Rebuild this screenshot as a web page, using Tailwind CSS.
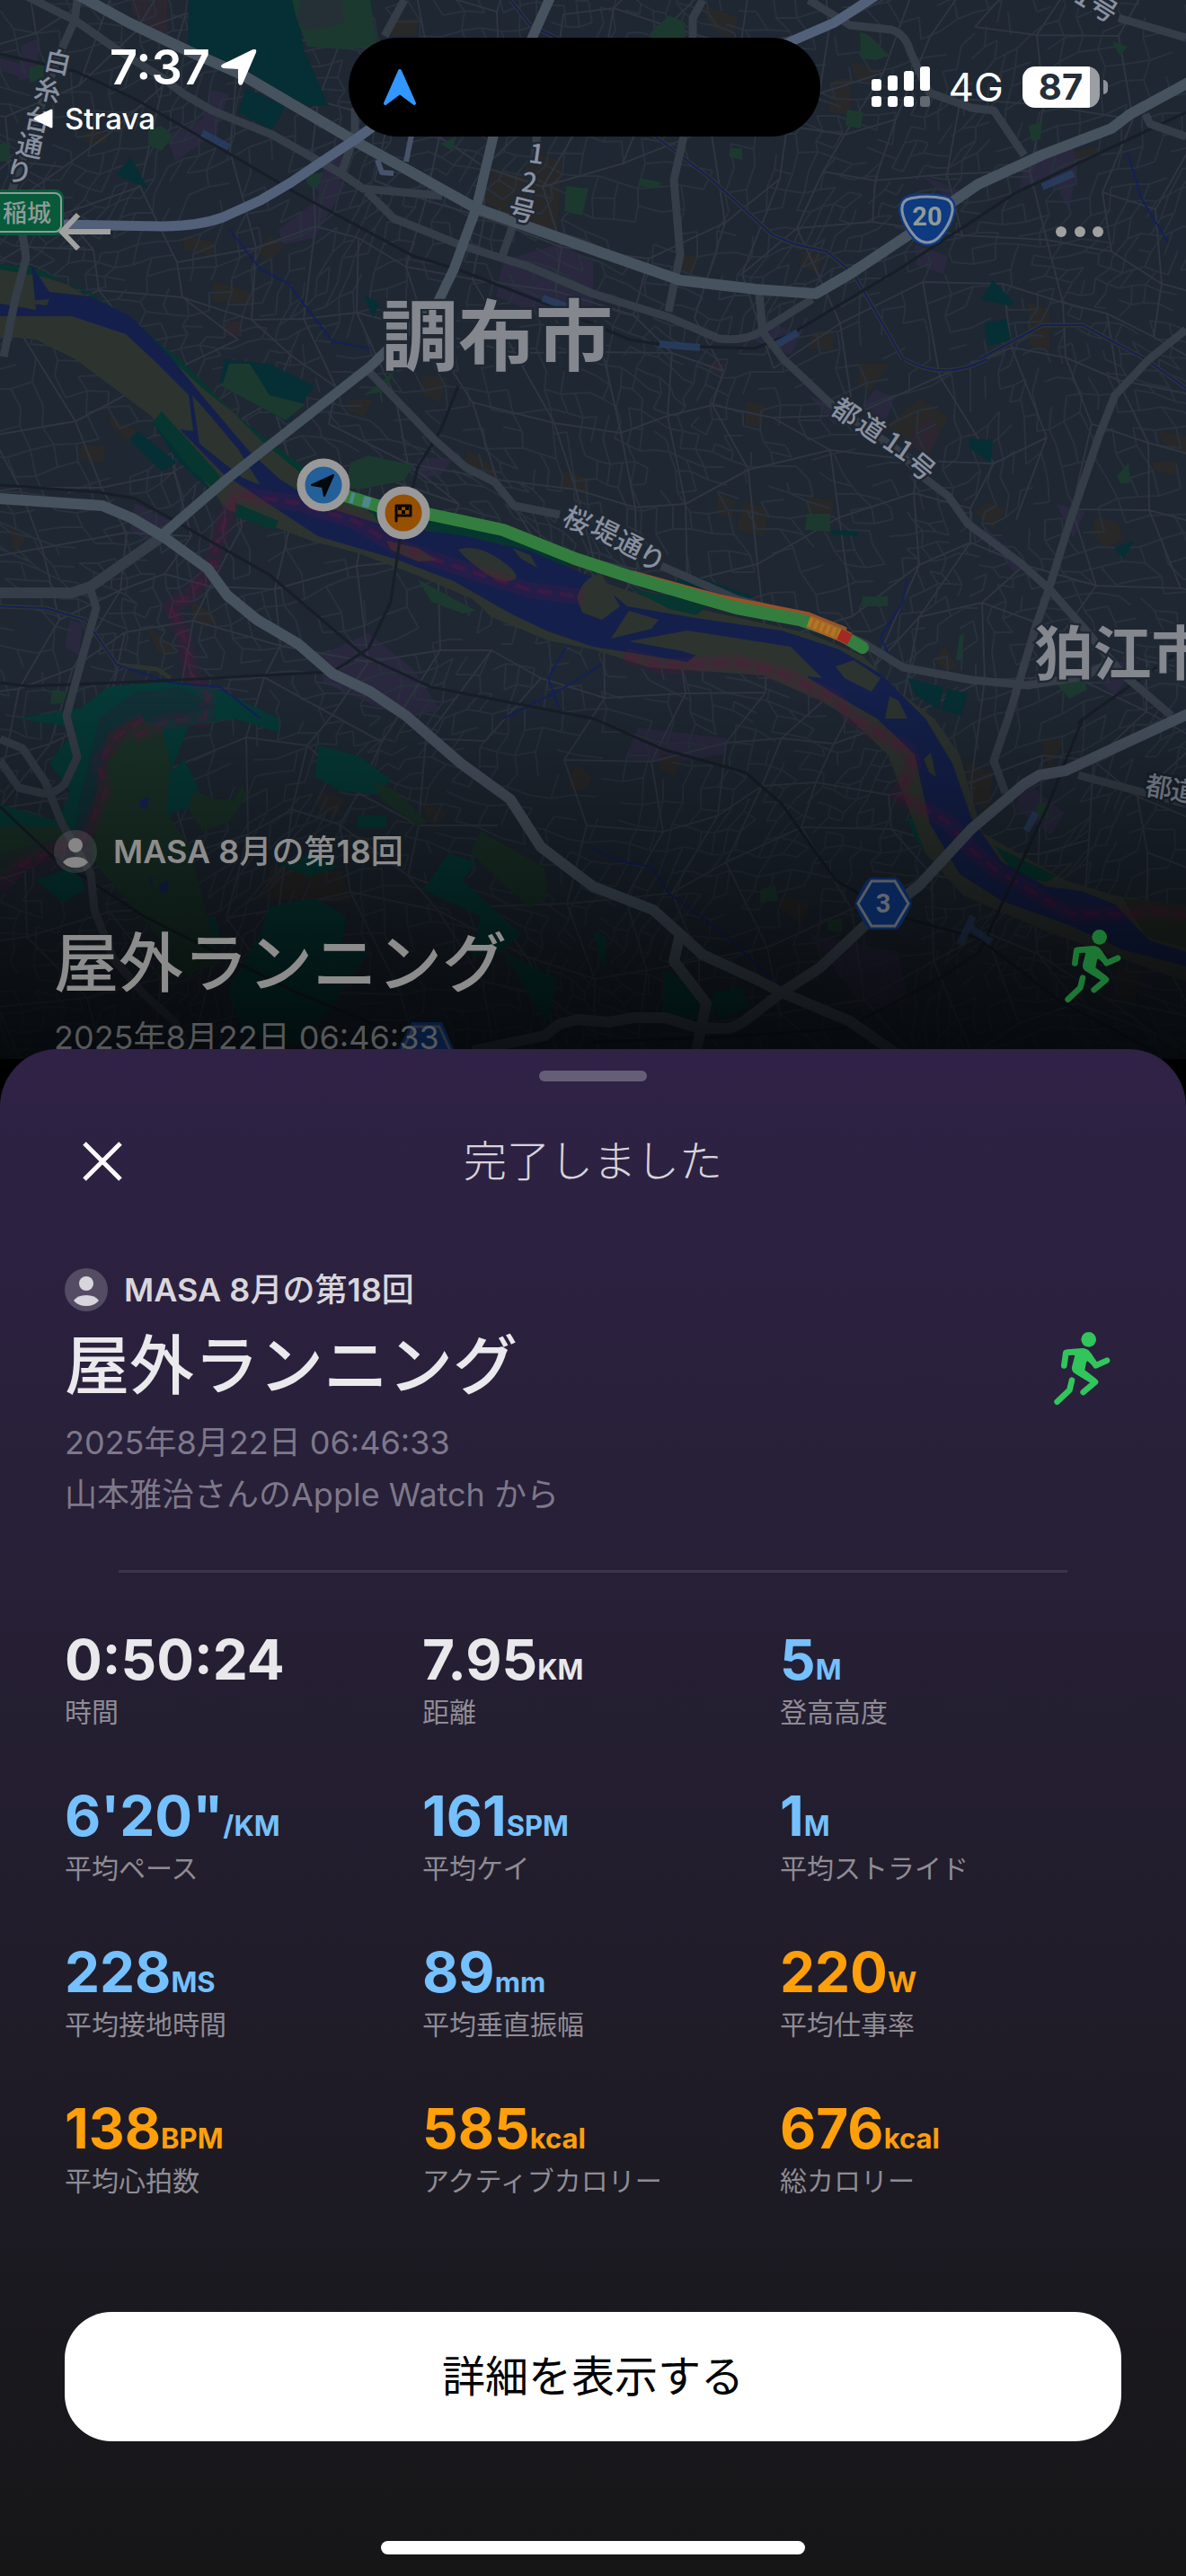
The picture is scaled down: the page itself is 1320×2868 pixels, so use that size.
<!DOCTYPE html>
<html lang="ja">
<head>
<meta charset="utf-8">
<meta name="viewport" content="width=device-width, initial-scale=1">
<title>屋外ランニング</title>
<script src="https://cdn.jsdelivr.net/npm/@tailwindcss/browser@4"></script>
</head>
<body class="bg-black font-['Inter','Noto_Sans_CJK_JP',sans-serif] text-white">
<svg class="hidden" aria-hidden="true">
  <symbol id="runner" viewBox="95 93 192 250">
    <g fill="none" stroke="currentColor" stroke-linecap="round" stroke-linejoin="round">
      <path stroke-width="20" d="M132 207L138 164L196 160M214 172L238 207L275 190M180 228L236 262L196 296"/>
      <path stroke-width="20" d="M109 328L150 289L158 256"/>
    </g>
    <path fill="currentColor" d="M134 155Q160 150 196 150Q212 151 220 164L236 192L226 206L210 192L206 196L201 222L240 252L228 270L172 236Q156 228 158 212L168 174Z"/>
    <circle fill="currentColor" cx="214" cy="120" r="25"/>
  </symbol>
  <symbol id="avatar" viewBox="0 0 48 48">
    <circle cx="24" cy="24" r="24" fill="currentColor" opacity=".24"/>
    <circle cx="24" cy="17" r="8" fill="currentColor"/>
    <path d="M10 36Q14 30 24 30T38 36Q33 42 24 42T10 36Z" fill="currentColor"/>
  </symbol>
</svg>

<main class="flex min-h-screen flex-col">
  <section class="relative overflow-hidden">
    <svg class="absolute inset-0 h-full w-full" viewBox="0 0 1320 1179" preserveAspectRatio="xMidYMin slice" aria-label="地図" role="img">
      <defs>
        <linearGradient id="fade" x1="0" y1="0" x2="0" y2="1">
          <stop offset="0" stop-color="#000" stop-opacity="0"/>
          <stop offset=".5" stop-color="#000" stop-opacity=".38"/>
          <stop offset="1" stop-color="#020406" stop-opacity=".85"/>
        </linearGradient>
      </defs>
      <rect width="1320" height="1179" fill="#1e2732"/>
      <!-- blocks of land use -->
      <g fill="#29283f">
        <path d="M24 50L45 42L40 85L20 90ZM235 100L255 105L240 145L225 130ZM185 150L230 130L245 145L195 180ZM0 65L30 72L20 85L0 78ZM365 195L385 205L350 265L315 272L310 255L350 225ZM350 210L375 160L388 172L370 225ZM560 290L620 272L660 290V345L600 350L552 330ZM1140 180L1190 155L1200 180L1190 235L1170 195L1135 210ZM1025 195L1068 212L1060 225ZM1018 272L1055 285L1050 305L1020 295ZM150 560L190 580L175 610L145 590ZM465 510L505 510L490 530L465 532ZM355 730L410 705L460 745L490 790L450 800L360 760ZM78 690L92 695L88 730L72 720ZM960 450L975 433L996 443L985 470L965 470ZM900 440L935 455L930 475ZM1175 560L1207 570L1195 600ZM1090 580L1140 630L1130 640ZM710 810L810 822L805 840L745 850L695 845ZM1140 870L1185 905L1170 930L1130 900ZM900 1040L1000 1060L1010 1115L960 1120ZM845 350L890 375L880 395L840 380ZM1207 740L1270 735L1240 775Z"/>
      </g>
      <g fill="#292829">
        <path d="M100 140L120 150L118 160L92 158ZM205 262L240 270L235 285L205 278ZM300 262L316 275L298 293L286 278ZM238 313L278 325L282 338L237 335ZM548 187L580 195L595 170L625 180L620 255L600 260L540 225ZM440 22L466 20L463 40L430 40ZM780 5L822 20L815 42L800 38L790 28ZM948 68L982 80L965 92L950 85ZM924 90L947 86L946 128L922 125ZM757 284L776 285L772 306L754 303ZM893 280L916 285L910 303L890 297ZM1195 168L1225 164L1215 178L1200 180ZM1145 336L1168 345L1168 390L1145 385ZM905 368L928 368L926 390L900 388ZM120 462L155 480L140 490L125 475ZM90 495L118 497L115 515L90 512ZM390 445L415 445L405 465L385 455ZM470 417L497 420L490 448L470 440ZM520 500L553 522L550 535L517 515ZM628 525L655 532L655 552L622 540ZM10 585L30 600L16 615ZM215 670L243 687L228 700L212 685ZM163 697L195 720L190 730L175 725ZM957 405L990 405L968 436L955 428ZM1025 443L1055 465L1035 505L985 475ZM830 447L852 450L848 477L830 472ZM800 547L818 560L815 577L797 573ZM828 558L855 567L850 598L820 590ZM898 553L928 558L926 572L898 570ZM1085 570L1100 560L1120 568L1105 590ZM1220 575L1245 582L1250 600L1230 610L1215 595ZM1040 735L1052 718L1065 745L1050 745ZM1290 480L1320 485V505L1293 492ZM1285 515L1310 513V530L1283 524ZM355 880L385 890L372 912L350 895ZM468 893L498 905L482 922ZM302 965L380 970L390 1005L290 1000ZM735 838L760 845L750 865L733 855ZM1075 850L1105 860L1100 905L1080 890ZM1158 823L1183 825L1168 858ZM870 998L902 1005L890 1028L868 1010ZM640 850L660 865L650 880L632 878ZM1243 1075L1270 1080L1262 1115L1240 1110Z"/>
      </g>
      <path fill="#2c2630" d="M147 0H186V43L165 32L147 15ZM248 358L268 357L270 375L250 374ZM1020 478L1035 465L1046 483L1032 510L1010 492ZM788 405H808L802 416L790 414Z"/>
      <g id="streets" fill="none" stroke="#28313c" stroke-width="2"></g>
      <g id="lanes" fill="none" stroke="#2f3541" stroke-width="2"></g>
      <!-- parks and woods -->
      <path fill="#052f34" d="M210 0H330L338 55L366 118H345L250 82L209 63ZM274 98L317 118L303 145L265 125ZM130 195L145 175L165 210L130 195ZM1092 333L1105 312L1130 338L1122 340ZM1095 360L1120 355L1125 378L1100 385ZM405 328L422 338L415 354ZM174 458L245 530L232 545L195 510L170 470ZM153 480L197 515L180 525L145 490ZM260 560L305 575L300 587L262 572ZM250 400L300 405L350 430L320 470L285 450L245 425ZM1078 488L1105 490L1103 515L1080 500ZM745 650L770 640L840 665L800 677ZM927 590L955 592V597L925 595ZM1240 610L1262 602L1250 622ZM1010 755L1050 765L1045 790L1020 775ZM1055 767L1077 772L1070 797L1048 790Z"/>
      <path fill="#1c392f" d="M325 0H412L420 52L385 55L342 52L330 20ZM405 440L440 412L428 436ZM390 515L410 507L460 518L450 535L400 545L385 540ZM247 430L255 405L278 405L300 440L340 450L318 468ZM165 145L180 140L192 152L180 168L165 162ZM340 195L360 192L352 210L342 205ZM490 160L508 152L503 168ZM630 207L655 210L648 240L628 235ZM33 75L50 70L48 90L33 92ZM0 160L11 158V178L0 180ZM725 35L745 17L762 25L763 42L722 42ZM957 35L968 40L990 62L975 67L958 65ZM943 122L961 125L958 143L941 140ZM1145 140L1160 135L1158 155L1148 158ZM812 165H826V178L812 175ZM712 198L736 203L733 209L710 207ZM1238 46L1255 52L1246 62ZM1243 530L1256 515L1258 538L1247 538ZM898 572H924V592L896 590ZM465 645L530 680L515 683L480 670ZM1175 760L1205 753L1210 768L1190 778ZM58 768L75 770L70 783L56 784ZM1155 895L1167 893V912L1153 908ZM847 990L863 985L866 1003L845 1005ZM922 1025L937 1022L937 1038L921 1036ZM960 664H988V675H958ZM1068 708L1073 705L1070 735L1064 735Z"/>
      <path fill="#2c2c3c" d="M330 22L335 0H380L384 25L340 35Z" opacity=".6"/>
      <path fill="#053a37" d="M20 800L90 788L120 765L190 758L245 768L290 790L310 800V815L260 800L210 808L190 860L190 910L60 945L0 960V895L65 915L78 880L55 850L85 810ZM355 830L400 842L435 868L420 885L380 880L350 865ZM475 985L500 950L530 960L515 980L580 1040L560 1060L620 1090L610 1140L560 1060L525 1065L535 1020L470 990ZM300 1010L350 1000L385 1020L380 1050L410 1060L370 1120L330 1165L270 1150L255 1100L290 1040ZM40 980L85 965L95 990L70 1005ZM660 1037L675 1043L672 1080ZM738 1080L780 1100V1135L738 1130ZM795 1105L825 1100L833 1120L805 1135L790 1120ZM1010 912L1032 908L1045 940L1035 957L1020 935ZM310 962L350 950L378 965L345 976ZM398 908H430V921H398ZM200 1030L240 1020L245 1045L215 1060ZM190 860L205 845L222 880L212 900L190 905Z"/>
      <path fill="#1a3329" d="M120 815L150 800L180 810L190 850L185 905L210 940L225 1000L245 1070L210 1085L170 1082L190 1060L105 960L98 920L115 850ZM215 880L240 890L260 890L270 875L275 885L255 915L225 925L210 900ZM415 870L440 880L475 915L465 920L425 890ZM535 925L560 940L605 965L610 1000L590 1010L560 985L525 950ZM0 920L75 920L95 935L0 975Z"/>
      <path fill="#16245a" d="M157 890L166 888L163 900L155 898ZM178 984L188 980L186 994L177 992ZM166 978L170 976L169 988Z"/>
      <path fill="#281f3a" opacity=".35" d="M110 800L150 770L200 765L240 785L200 800L150 805L120 850L100 960L0 970V950L80 930Z"/>
      <!-- river and its banks -->
      <path fill="#2d3430" d="M0 298L33 303L75 317L130 350L198 400L245 445L295 492L337 527L420 575L500 590L560 606L640 637L720 665L840 692L900 705L960 730L1000 770L1040 800L1068 840L1093 927L1186 980L1241 997L1320 1010V1093L1165 1037L1072 997L1030 950L988 840L946 800L913 780L849 752L723 743L660 723L610 713L547 687L526 667L463 640L396 615L349 603L253 567L168 463L84 400L40 378L0 374Z"/>
      <path fill="#06362f" d="M0 294L35 297L100 325L160 370L225 432L300 492L345 525L335 527L290 490L200 400L130 345L70 312L0 300ZM180 458L245 530L240 545L215 525L170 470ZM262 560L310 580L305 590L262 575ZM405 555L500 580L600 600L640 620L630 632L560 606L420 580ZM1107 942L1175 975L1165 982L1130 975ZM700 655L790 672L775 685L745 678Z"/>
      <path fill="#14204b" d="M0 338L40 345L35 295L55 325L100 330L145 352L189 396L227 443L278 503L311 533L358 563L421 583L518 597L589 613L660 643L698 675L774 688L870 702L934 723L980 750L1030 800L1060 850L1081 910L1115 960L1165 987L1203 992L1241 1007L1279 1047L1320 1060V1076L1249 1057L1190 1030L1115 1003L1068 973L1035 917L1018 840L976 800L929 773L900 755L887 727L799 710L765 737L660 720L610 703L568 683L505 647L442 623L354 597L278 547L248 527L200 478L215 480L210 440L170 400L140 372L80 352L0 352Z"/>
      <path fill="#2d3430" d="M32 335L55 333L52 340L35 338ZM214 440L240 470L265 500L290 540L270 532L222 494ZM510 612Q530 605 555 622T573 645Q560 652 540 638T510 612ZM430 602L465 610L487 624L465 625L435 612ZM570 610L590 618L598 632L580 622ZM642 665Q650 640 670 640L690 675L670 690L648 682ZM680 711L700 680L733 690L725 700ZM700 714L765 702L880 720L915 755L880 750L800 738L760 725ZM930 742L950 735L980 755L970 770L940 755ZM990 775L1000 780L1010 800H985ZM1028 845L1036 838L1042 865L1034 860Z"/>
      <path d="M1250 1000L1320 1008V1055L1275 1043Z" fill="#252d27"/>
      <!-- popular-route shading -->
      <g fill="none" stroke="#61163f" stroke-linejoin="round">
        <path stroke-width="18" opacity=".2" d="M232 640L248 585L263 550L330 560L395 580L440 608L520 635L590 657L650 665M210 665L190 675L205 710L212 750L232 775L228 800L185 803L150 820M240 625L210 665M695 730L740 742L820 737L870 750L930 778L950 800L1010 835L1017 850L1000 885L1055 915L1080 945L1110 970L1190 1017L1240 1018L1285 1014L1320 1020M160 800L130 820L110 850L118 880L95 930L20 965L0 990"/>
        <path stroke-width="5" stroke-dasharray="16 9" opacity=".38" d="M232 640L248 585L263 550L330 560L395 580L440 608L520 635L590 657L650 665M210 665L190 675L205 710L212 750L232 775L228 800L185 803L150 820M240 625L210 665M695 730L740 742L820 737L870 750L930 778L950 800L1010 835L1017 850L1000 885L1055 915L1080 945L1110 970L1190 1017L1240 1018L1285 1014L1320 1020M160 800L130 820L110 850L118 880L95 930L20 965"/>
      </g>
      <!-- streams and railways -->
      <path fill="none" stroke="#2d3430" stroke-width="5" d="M568 0L590 28L625 45M727 150L790 198L860 262L885 272L920 280L950 305L985 365L1005 400M1090 400L1160 362L1205 362L1275 400L1320 432M1007 400Q1050 425 1098 400M0 675L50 677L95 690L130 740L175 745L190 755"/>
      <path fill="none" stroke="#14205a" stroke-width="2" d="M568 0L590 28L625 45M727 150L790 198L860 262L885 272L920 280L950 305L985 365L1005 400M1090 400L1160 362L1205 362L1275 400L1320 432M1007 400Q1050 425 1098 400M0 675L50 677L95 690L130 740L190 760L245 765L290 800M255 255L290 300L320 315L370 380L412 388M1010 645L1005 670L980 710L990 730M660 945L695 960L725 965L745 995L800 1035L860 1090M630 720L610 755L625 795M670 740L620 770L560 800M1255 170L1270 220L1300 270"/>
      <path fill="none" stroke="#171e28" stroke-width="3" d="M0 60L85 80L150 110L250 168L330 215L460 285L510 300L600 335L700 378L744 385L840 388L880 372L1000 300L1130 215L1320 125M0 540L110 548L150 555L200 583L300 640L405 730L480 765L660 800L740 835L830 860L870 895L930 980L1000 1020L1090 1045L1180 1115L1280 1168M0 760L30 764L180 758L370 748L410 722L435 670L445 600M510 430L490 480L465 520L455 560M1205 800L1165 900L1090 1060L1045 1090L940 1145L800 1155L660 1160M1320 720L1220 790L1200 805M0 898L60 955L160 1020L330 1105L500 1175"/>
      <path fill="none" stroke="#294065" stroke-width="8" d="M225 148L255 164M734 383L779 387M862 385L888 370M1160 208L1195 193M604 332L632 342M1083 1020L1068 1052M1080 1033L1103 1049M1153 905L1142 925" opacity=".8"/>
      <!-- roads, lesser to greater -->
      <g fill="none" stroke="#353d48" stroke-linejoin="round" stroke-width="9">
        <path d="M30 -4L84 23L130 55L181 87L205 105L236 123L303 150L379 193L404 210L492 218M408 213L438 243L513 273L589 297L660 327L744 353L800 377Q830 380 845 370L904 333M86 0L83 23L63 67L13 213M25 260L29 287L17 333L4 397M404 210L380 193L395 150V120M450 0L428 40M597 150V180M573 245L558 288"/>
        <path d="M782 0L771 20V45M761 152L750 200L757 283L744 347M900 0L946 28L992 33Q1008 38 1013 57L1034 103L1081 120L1106 123L1140 173M1245 20L1320 42M1275 127L1280 138L1320 152M845 327L849 370L872 400L925 450L997 500L1030 533L1056 553L1077 583L1136 627L1169 657L1207 700L1249 750L1304 797M1320 367L1279 400L1241 440L1224 483L1190 583L1167 657L1152 700L1123 797L1106 847L1119 883M736 630L820 667L900 690L963 717L1005 743L1081 757L1144 763L1207 753L1240 735M410 413L484 490L518 520L551 537L572 563L623 573M101 657L107 677L93 727L74 797L86 843L72 873Q60 885 46 883L21 877L0 847M0 823L25 833L50 870L69 917L101 973L105 1013L126 1067L160 1107L194 1137L210 1168M1200 863L1320 895"/>
        <path stroke-width="12" d="M181 597L101 653L80 660H0"/>
      </g>
      <g fill="none" stroke="#47525f" stroke-linejoin="round">
        <path stroke-width="12" d="M88 -5L143 25L210 57L269 83L337 123L400 160L455 190L530 232L660 278L757 312L841 322L908 327L946 305L1009 263L1064 222L1089 205L1161 172L1237 143L1258 127L1330 88"/>
        <path stroke-width="11" d="M612 -2L591 45L570 90L549 152L530 232L505 300L488 335L412 408L375 437L253 533L181 595"/>
        <path stroke-width="12" d="M-2 555L114 563L147 577L181 597L231 633L253 663L286 690L332 717L370 750L412 770L452 797L513 850L568 890L602 943L660 987L727 1013L757 1040L782 1063L841 1090L870 1105L946 1137L1000 1175M1322 795L1186 858L1157 863L1140 873L1081 923L1022 987L963 1030L913 1077L870 1105L828 1137Q815 1146 803 1145H778L740 1133H706L677 1138L644 1135L623 1140L606 1153L526 1170M757 1040L750 1070L786 1117L774 1175"/>
        <path stroke="#536079" stroke-width="11" d="M69 250L181 252Q220 252 248 242L290 223L324 203L358 180L396 155L430 130M860 55L929 25L975 -5"/>
        <path stroke="#47536b" stroke-width="6" d="M458 150L452 180M420 178L425 192L438 193"/>
      </g>
      <!-- recorded route -->
      <g fill="none" stroke-linecap="round" stroke-linejoin="round">
        <path stroke="#95522a" stroke-width="5" d="M705 638L800 664L900 684L940 700"/>
        <path stroke="#337e3e" stroke-width="14" d="M375 549L420 563L480 573L560 590L640 622L710 645L820 677L890 690L935 706L960 721"/>
        <path stroke="#a8632a" stroke-width="14" stroke-linecap="butt" d="M900 692L945 711"/>
        <path stroke="#af7920" stroke-width="10" stroke-dasharray="4 3" stroke-linecap="butt" d="M900 692L934 706"/>
        <path stroke="#a42923" stroke-width="13" stroke-linecap="butt" d="M934 706L946 712"/>
        <path stroke="#538ba2" stroke-width="12" stroke-linecap="butt" d="M390 554L394 555M404 558L412 560" opacity=".8"/>
      </g>
      <rect y="760" width="1320" height="420" fill="url(#fade)"/>
      <!-- place and road names -->
      <g fill="#84878e" stroke="#202833" stroke-width="5" paint-order="stroke" font-weight="700" font-family="'Noto Sans CJK JP',sans-serif" text-anchor="middle">
        <g font-size="86"><text x="467" y="406">調</text><text x="553" y="406">布</text><text x="639" y="406">市</text></g>
        <g font-size="65"><text x="1184" y="751">狛</text><text x="1249" y="751">江</text><text x="1314" y="751">市</text></g>
        <g font-size="30" font-weight="500" fill="#8990a0">
          <text transform="translate(64 70) rotate(12)" y="10">白</text><text transform="translate(53 101) rotate(12)" y="10">糸</text><text transform="translate(42 134) rotate(12)" y="10">台</text><text transform="translate(33 163) rotate(12)" y="10">通</text><text transform="translate(21 192) rotate(12)" y="10">り</text>
          <text transform="translate(597 172) rotate(8)" y="10">1</text><text transform="translate(589 204) rotate(8)" y="10">2</text><text transform="translate(581 235) rotate(14)" y="10">号</text>
          <text transform="translate(941 459) rotate(34)" y="10">都</text><text transform="translate(969 477) rotate(34)" y="10">道</text><text transform="translate(993 493) rotate(34)" y="10">1</text><text transform="translate(1006 502) rotate(34)" y="10">1</text><text transform="translate(1025 520) rotate(40)" y="10">号</text>
          <text transform="translate(642 580) rotate(26)" y="10">桜</text><text transform="translate(673 592) rotate(26)" y="10">堤</text><text transform="translate(700 607) rotate(26)" y="10">通</text><text transform="translate(725 622) rotate(26)" y="10">り</text>
          <text transform="translate(1228 10) rotate(32)" y="10">号</text><text transform="translate(1206 -3) rotate(32)" y="10">1</text>
          <g fill="#666c77" stroke="#151b23"><text transform="translate(1290 877) rotate(9)" y="10">都</text><text transform="translate(1318 882) rotate(9)" y="10">道</text></g>
        </g>
      </g>
      <!-- road shields -->
      <g text-anchor="middle" font-weight="700" fill="#8f9b98" font-family="Roboto,'Noto Sans CJK JP',sans-serif">
        <rect x="-10" y="211" width="81" height="51" rx="9" fill="#075a3a"/>
        <rect x="-10" y="215" width="78" height="43" rx="7" fill="none" stroke="#8f9b98" stroke-width="2"/>
        <text x="30" y="247" font-size="27" font-weight="500">稲城</text>
        <path d="M1012 217Q1032 213 1052 217Q1064 220 1064 234Q1062 250 1046 269Q1032 279 1018 269Q1002 250 1000 234Q1000 220 1012 217Z" fill="#0d3a80"/>
        <path d="M1013 221Q1032 217 1051 221Q1061 223 1060 235Q1058 250 1044 265Q1032 275 1020 265Q1006 250 1004 235Q1003 223 1013 221Z" fill="none" stroke="#8790a0" stroke-width="3"/>
        <text x="1032" y="251" font-size="29">20</text>
        <path d="M969 977H997Q1003 978 1015 1006Q1003 1034 997 1035H969Q963 1034 951 1006Q963 978 969 977Z" fill="#082555"/>
        <path d="M970 981H996L1011 1006L996 1031H970L955 1006Z" fill="none" stroke="#565a62" stroke-width="3"/>
        <text x="983" y="1016" font-size="29" fill="#60656e">3</text>
        <path d="M458 1138H492L508 1175H440Z" fill="#071c3d"/>
        <path d="M461 1143H489L502 1172H446Z" fill="none" stroke="#29313d" stroke-width="3"/>
      </g>
      <!-- start and finish -->
      <circle cx="360" cy="540" r="25" fill="#235f99" stroke="#999" stroke-width="9"/>
      <path d="M371 529L361 552L359 542L347 540Z" fill="#05080c" stroke="#05080c" stroke-width="2" stroke-linejoin="round"/>
      <circle cx="449" cy="571" r="25" fill="#965000" stroke="#999" stroke-width="9"/>
      <path d="M441 580V563H457V574H441" fill="none" stroke="#0b0602" stroke-width="3" stroke-linejoin="round" stroke-linecap="round"/>
      <path d="M443 564h4v4h-4zM451 564h4v4h-4zM447 568h4v4h-4z" fill="#0b0602"/>
    </svg>

    <div class="relative">
      <header class="grid grid-cols-[1fr_525px_1fr] pt-[42px] pr-5">
        <div class="flex flex-col gap-1 pl-9">
          <div class="flex h-[66px] items-center gap-3 pl-[86px] text-[54px] leading-[66px] font-semibold">7:37
            <svg class="size-10" viewBox="0 0 40 40"><path d="M38 3L23 38Q21 40 20 37V21L3 20Q-1 19 3 17L36 1Q39 0 38 3Z" fill="#fff" stroke="#fff" stroke-width="2" stroke-linejoin="round"/></svg>
          </div>
          <a href="#" class="flex h-10 items-center gap-3 text-[33px] leading-10 font-medium">
            <svg class="h-6 w-6" viewBox="0 0 24 24"><path d="M3 12L21 3V21Z" fill="#fff" stroke="#fff" stroke-width="3" stroke-linejoin="round"/></svg>Strava</a>
        </div>
        <div class="flex h-[110px] items-center rounded-full bg-black pl-[38px]">
          <svg class="h-[42px] w-[38px]" viewBox="0 0 38 42"><path d="M19 3L35 39L19 27L3 39Z" fill="#3297ff" stroke="#3297ff" stroke-width="4" stroke-linejoin="round"/></svg>
        </div>
        <div class="flex h-[110px] items-center pl-[57px]">
          <svg class="h-[46px] w-[66px] shrink-0" viewBox="0 0 66 46" fill="#fff"><rect y="14" width="11" height="13" rx="3"/><rect x="18" y="10" width="11" height="17" rx="3"/><rect x="36" y="5" width="11" height="22" rx="3"/><rect x="54" width="11" height="27" rx="3"/><rect y="33" width="11" height="12" rx="3"/><rect x="18" y="33" width="11" height="12" rx="3"/><rect x="36" y="33" width="11" height="12" rx="3"/><rect x="54" y="33" width="11" height="12" rx="3" opacity=".3"/></svg>
          <span class="ml-5 w-[62px] text-[44px] leading-none">4G</span>
          <div class="ml-5 flex h-[46px] w-[86px] shrink-0 items-center justify-center rounded-[14px] bg-linear-to-r from-white from-87% to-[#9b9fa4] to-87% text-[40px] leading-none font-bold text-[#252e39]">87</div>
          <div class="ml-1 h-4 w-[5px] shrink-0 rounded-r-full bg-[#8d9299]"></div>
        </div>
      </header>

      <nav class="mt-[50px] flex h-28 items-center justify-between px-[60px] text-[#a1a1a0]">
        <button type="button" aria-label="戻る"><svg class="h-12 w-[72px]" viewBox="0 0 72 48" fill="none" stroke="currentColor" stroke-width="6"><path d="M63 24H9M27 5L9 24L27 43"/></svg></button>
        <button type="button" aria-label="その他"><svg class="h-6 w-[88px]" viewBox="0 0 88 24" fill="currentColor"><circle cx="9" cy="12" r="6"/><circle cx="30" cy="12" r="6"/><circle cx="50" cy="12" r="6"/></svg></button>
      </nav>

      <div class="mt-[610px] px-[60px] text-[#8c8c8c]">
        <div class="flex h-12 items-center gap-[18px] text-4xl leading-[48px] font-semibold"><svg class="size-12 text-[#868686]"><use href="#avatar"/></svg><p>MASA 8<span class="font-medium">月の第</span>18<span class="font-medium">回</span></p></div>
        <div class="mt-[52px] flex items-center justify-between pr-3">
          <h2 class="text-7xl leading-[96px] font-medium">屋外ランニング</h2>
          <svg class="mt-2 h-[84px] w-16 text-[#1d7734]"><use href="#runner"/></svg>
        </div>
        <p class="mt-[11px] text-4xl leading-[48px] text-[#55575a]">2025年8月22日 06:46:33</p>
      </div>
    </div>
  </section>

  <section class="relative -mt-[11px] flex flex-1 flex-col rounded-t-[64px] bg-linear-to-b from-[#2f2246] via-[#231e2f] to-[#161617] px-[72px] pt-6 pb-6">
    <div class="h-3 w-[120px] self-center rounded-full bg-[#665e78]"></div>
    <div class="mt-[53px] grid h-[72px] grid-cols-[84px_1fr_84px] items-center">
      <button type="button" aria-label="閉じる" class="flex justify-center"><svg class="size-12" viewBox="0 0 48 48" fill="none" stroke="#fff" stroke-width="5"><path d="M4 4L44 44M44 4L4 44"/></svg></button>
      <h1 class="text-center text-5xl leading-[72px] font-light text-[#d6d4da]">完了しました</h1>
    </div>
    <div class="mt-[83px] flex h-12 items-center gap-[18px] text-4xl leading-[48px] font-semibold text-[#d8d6dc]"><svg class="size-12"><use href="#avatar"/></svg><p>MASA 8<span class="font-medium">月の第</span>18<span class="font-medium">回</span></p></div>
    <div class="mt-3 flex items-center justify-between pr-3">
      <h2 class="text-7xl leading-[96px] font-medium text-[#eae9ec]">屋外ランニング</h2>
      <svg class="mt-2 h-[84px] w-16 text-[#31c55c]"><use href="#runner"/></svg>
    </div>
    <p class="mt-[9px] text-4xl leading-[58px] text-[#7d788a]">2025年8月22日 06:46:33<br>山本雅治さんのApple Watch から</p>
    <hr class="mx-[60px] mt-[55px] border-t-[3px] border-[#3b354a]">

    <dl class="mt-[65px] grid grid-cols-3 gap-x-[18px] gap-y-[66px] text-[#75c0ff]">
      <div class="flex flex-col-reverse gap-2"><dt class="text-3xl leading-9 text-[#8f8c94]">時間</dt><dd class="text-[62px] leading-[64px] font-bold text-[#e9e8eb]">0:50:24</dd></div>
      <div class="flex flex-col-reverse gap-2"><dt class="text-3xl leading-9 text-[#8f8c94]">距離</dt><dd class="text-[62px] leading-[64px] font-bold text-[#e9e8eb]">7.95<span class="text-[31px] leading-none">KM</span></dd></div>
      <div class="flex flex-col-reverse gap-2"><dt class="text-3xl leading-9 text-[#8f8c94]">登高高度</dt><dd class="text-[62px] leading-[64px] font-bold">5<span class="text-[31px] leading-none">M</span></dd></div>
      <div class="flex flex-col-reverse gap-2"><dt class="text-3xl leading-9 text-[#8f8c94]">平均ペース</dt><dd class="text-[62px] leading-[64px] font-bold">6'20"<span class="text-[31px] leading-none">/KM</span></dd></div>
      <div class="flex flex-col-reverse gap-2"><dt class="text-3xl leading-9 text-[#8f8c94]">平均ケイ</dt><dd class="text-[62px] leading-[64px] font-bold">161<span class="text-[31px] leading-none">SPM</span></dd></div>
      <div class="flex flex-col-reverse gap-2"><dt class="text-3xl leading-9 text-[#8f8c94]">平均ストライド</dt><dd class="text-[62px] leading-[64px] font-bold">1<span class="text-[31px] leading-none">M</span></dd></div>
      <div class="flex flex-col-reverse gap-2"><dt class="text-3xl leading-9 text-[#8f8c94]">平均接地時間</dt><dd class="text-[62px] leading-[64px] font-bold">228<span class="text-[31px] leading-none">MS</span></dd></div>
      <div class="flex flex-col-reverse gap-2"><dt class="text-3xl leading-9 text-[#8f8c94]">平均垂直振幅</dt><dd class="text-[62px] leading-[64px] font-bold">89<span class="text-[31px] leading-none">mm</span></dd></div>
      <div class="flex flex-col-reverse gap-2"><dt class="text-3xl leading-9 text-[#8f8c94]">平均仕事率</dt><dd class="text-[62px] leading-[64px] font-bold text-[#ff9f0a]">220<span class="text-[31px] leading-none">W</span></dd></div>
      <div class="flex flex-col-reverse gap-2"><dt class="text-3xl leading-9 text-[#8f8c94]">平均心拍数</dt><dd class="text-[62px] leading-[64px] font-bold text-[#ff9f0a]">138<span class="text-[31px] leading-none">BPM</span></dd></div>
      <div class="flex flex-col-reverse gap-2"><dt class="text-3xl leading-9 text-[#8f8c94]">アクティブカロリー</dt><dd class="text-[62px] leading-[64px] font-bold text-[#ff9f0a]">585<span class="text-[31px] leading-none">kcal</span></dd></div>
      <div class="flex flex-col-reverse gap-2"><dt class="text-3xl leading-9 text-[#8f8c94]">総カロリー</dt><dd class="text-[62px] leading-[64px] font-bold text-[#ff9f0a]">676<span class="text-[31px] leading-none">kcal</span></dd></div>
    </dl>

    <button type="button" class="mt-32 h-36 rounded-[52px] bg-white text-5xl text-black">詳細を表示する</button>
    <div class="mt-[111px] h-[15px] w-[472px] self-center rounded-full bg-white"></div>
  </section>
</main>

<script>
// Side streets: a warped lattice with gaps, and a coarser one for lanes.
let seed = 11;
const rnd = () => (seed = (seed * 16807) % 2147483647) / 2147483647;
function lattice(step, keep, phase) {
  const at = (i, j) => {
    const u = i * step, v = j * step;
    const jx = Math.sin(i * 12.9 + j * 78.2 + phase) * step * .2;
    const jy = Math.sin(i * 39.3 + j * 11.1 + phase) * step * .2;
    return [Math.round(u + 45 * Math.sin(v / 110 + phase) + 22 * Math.sin(u / 70 + v / 90) + jx),
            Math.round(v + 40 * Math.sin(u / 130 + phase) + 18 * Math.sin(v / 60 - u / 80) + jy)];
  };
  let d = "";
  for (let i = -4; i < 1400 / step + 4; i++) for (let j = -4; j < 1250 / step + 4; j++) {
    const p = at(i, j);
    if (rnd() < keep) d += "M" + p + "L" + at(i + 1, j);
    if (rnd() < keep) d += "M" + p + "L" + at(i, j + 1);
  }
  return d;
}
function add(id, d) {
  const p = document.createElementNS("http://www.w3.org/2000/svg", "path");
  p.setAttribute("d", d);
  document.getElementById(id).appendChild(p);
}
add("streets", lattice(19, .6, 1));
add("lanes", lattice(74, .85, 2.4));
</script>
</body>
</html>
